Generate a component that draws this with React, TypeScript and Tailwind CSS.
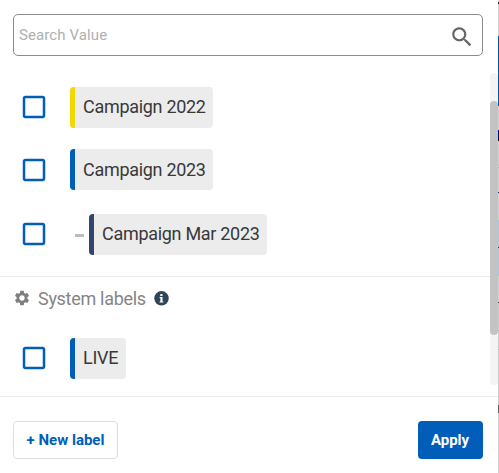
import React from "react";

function Checkbox() {
  return (
    <svg role="checkbox" aria-checked="false" viewBox="0 0 24 24" className="size-[30px] shrink-0" fill="#005eb8">
      <path d="M19 5v14H5V5h14m0-2H5c-1.1 0-2 .9-2 2v14c0 1.1.9 2 2 2h14c1.1 0 2-.9 2-2V5c0-1.1-.9-2-2-2z" />
    </svg>
  );
}

type LabelRowProps = { name: string; color: string; width: string; inset?: string; child?: boolean };

function LabelRow({ name, color, width, inset = "pb-px", child = false }: LabelRowProps) {
  return (
    <div className="flex h-[41px] pl-[19px]">
      <div className={`flex h-[41px] items-center ${inset}`}>
        <Checkbox />
        {child && <span className="ml-[26px] -mr-[16px] mt-[3px] h-[3px] w-[9px] bg-[#bcbcbc]" />}
      </div>
      <div className={`ml-[21px] flex h-[41px] overflow-hidden rounded-[4px] bg-[#ececec] ${width}`}>
        <span className={`h-full w-[5px] shrink-0 ${color}`} />
        <span className={`flex h-full items-center whitespace-nowrap pl-2 text-[18px] leading-[24px] tracking-[-0.3px] text-[#383838] ${inset}`}>{name}</span>
      </div>
    </div>
  );
}

const backdrop: [string, string][] = [
  ["h-[2px]", "bg-[#e0e0e0]"],
  ["h-[2px]", "bg-[#222]"],
  ["h-[32px]", "bg-[#d2d2d2]"],
  ["h-[70px]", "bg-[#0054a4]"],
  ["h-[24px]", "bg-[#d0d0d0]"],
  ["h-[10px]", "bg-[#000080]"],
  ["h-[1px]", "bg-[#111]"],
  ["h-[26px]", "bg-[#d0d0d0]"],
  ["h-[1px]", "bg-[#b4b4b4]"],
  ["h-[24px]", "bg-[#d0d0d0]"],
  ["h-[1px]", "bg-[#25344f]"],
  ["h-[27px]", "bg-[#d0d0d0]"],
  ["h-[27px]", "bg-[#b2c2dc]"],
  ["h-[1px]", "bg-[#25344f]"],
  ["h-[28px]", "bg-[#b2c2dc]"],
  ["h-[26px]", "bg-[#d0d0d0]"],
  ["h-[1px]", "bg-[#333]"],
  ["h-[27px]", "bg-[#cdcdcd]"],
  ["h-[1px]", "bg-[#b4b4b4]"],
  ["h-[18px]", "bg-[#cdcdcd]"],
  ["h-[1px]", "bg-[#b4b4b4]"],
  ["h-[55px]", "bg-[#cdcdcd]"],
  ["h-[8px]", "bg-[#5d5d5d]"],
  ["h-[60px]", "bg-[#d2d2d2]"],
];

export default function App() {
  return (
    <div className="flex h-[473px] w-[499px] overflow-hidden bg-white font-[Roboto,sans-serif]">
      <main className="flex w-[498px] flex-col">
        <div className="ml-[13px] mt-[14px] flex h-[42px] w-[470px] shrink-0 items-center justify-between rounded-[5px] border border-[#8c8c8c] pl-[5px] pr-[7px]">
          <span className="text-[15px] leading-[20px] tracking-[0.1px] text-[#b0b0b0]">Search Value</span>
          <svg viewBox="0 0 24 24" className="mt-[3px] size-[26px]" fill="#666">
            <path d="M15.5 14h-.79l-.28-.27C15.41 12.59 16 11.11 16 9.5 16 5.91 13.09 3 9.5 3S3 5.91 3 9.5 5.91 16 9.5 16c1.61 0 3.09-.59 4.23-1.57l.27.28v.79l5 4.99L20.49 19l-4.99-5zm-6 0C7.01 14 5 11.99 5 9.5S7.01 5 9.5 5 14 7.01 14 9.5 11.99 14 9.5 14z" />
          </svg>
        </div>

        <section className="mt-[17px] flex h-[312px] shrink-0">
          <div className="flex w-[490px] flex-col pt-[14px]">
            <LabelRow name="Campaign 2022" color="bg-[#f1d800]" width="w-[143px]" />
            <div className="mt-[21px]"><LabelRow name="Campaign 2023" color="bg-[#005eb8]" width="w-[143px]" inset="pt-px" /></div>
            <div className="mt-6"><LabelRow name="Campaign Mar 2023" color="bg-[#34456b]" width="w-[178px]" child /></div>
            <div className="mt-[21px] h-px bg-[#ebebeb]" />
            <div className="mt-[9px] flex h-6 items-center pl-[13px]">
              <svg viewBox="0 0 24 24" className="size-[18px]" fill="#808080">
                <path d="M19.14 12.94c.04-.3.06-.61.06-.94 0-.32-.02-.64-.07-.94l2.03-1.58c.18-.14.23-.41.12-.61l-1.92-3.32c-.12-.22-.37-.29-.59-.22l-2.39.96c-.5-.38-1.03-.7-1.62-.94l-.36-2.54c-.04-.24-.24-.41-.48-.41h-3.84c-.24 0-.43.17-.47.41l-.36 2.54c-.59.24-1.13.57-1.62.94l-2.39-.96c-.22-.08-.47 0-.59.22L2.74 8.87c-.12.21-.08.47.12.61l2.03 1.58c-.05.3-.09.63-.09.94s.02.64.07.94l-2.03 1.58c-.18.14-.23.41-.12.61l1.92 3.32c.12.22.37.29.59.22l2.39-.96c.5.38 1.03.7 1.62.94l.36 2.54c.05.24.24.41.48.41h3.84c.24 0 .44-.17.47-.41l.36-2.54c.59-.24 1.13-.56 1.62-.94l2.39.96c.22.08.47 0 .59-.22l1.92-3.32c.12-.22.07-.47-.12-.61l-2.01-1.58zM12 15.6c-1.98 0-3.6-1.62-3.6-3.6s1.62-3.6 3.6-3.6 3.6 1.62 3.6 3.6-1.62 3.6-3.6 3.6z" />
              </svg>
              <span className="ml-[7px] mt-px w-[109px] whitespace-nowrap text-[18px] leading-6 tracking-[-0.3px] text-[#858585]">System labels</span>
              <svg viewBox="0 0 15 15" className="ml-[7px] size-[15px]">
                <circle cx="7.5" cy="7.3" r="7.2" fill="#2f4359" />
                <path d="M6.3 3h2.2v2H6.3zM5.6 6.100h2.900v4.500h.8v1H5.600v-1h.8V7.100h-.8z" fill="white" />
              </svg>
            </div>
            <div className="mt-[28px]"><LabelRow name="LIVE" color="bg-[#005eb8]" width="w-[56px]" /></div>
          </div>
          <div className="w-2 rounded-full bg-[#f4f4f4] pt-[28px]">
            <div className="h-[234px] rounded-full bg-[#c3c3c3]" />
          </div>
        </section>

        <footer className="mt-[11px] flex items-start justify-between border-t border-[#ebebeb] pl-[13px] pr-[15px] pt-6">
          <button className="h-[38px] w-[105px] whitespace-nowrap rounded-[4px] border border-[#dedede] text-[15px] font-bold leading-5 text-[#005eb8]">+ New label</button>
          <button className="h-[38px] w-[65px] rounded-[4px] bg-[#005eb8] pr-px text-[15px] font-bold leading-5 text-white">Apply</button>
        </footer>
      </main>
      <aside className="w-px">
        {backdrop.map(([height, color], index) => <div key={index} className={`${height} ${color}`} />)}
      </aside>
    </div>
  );
}
